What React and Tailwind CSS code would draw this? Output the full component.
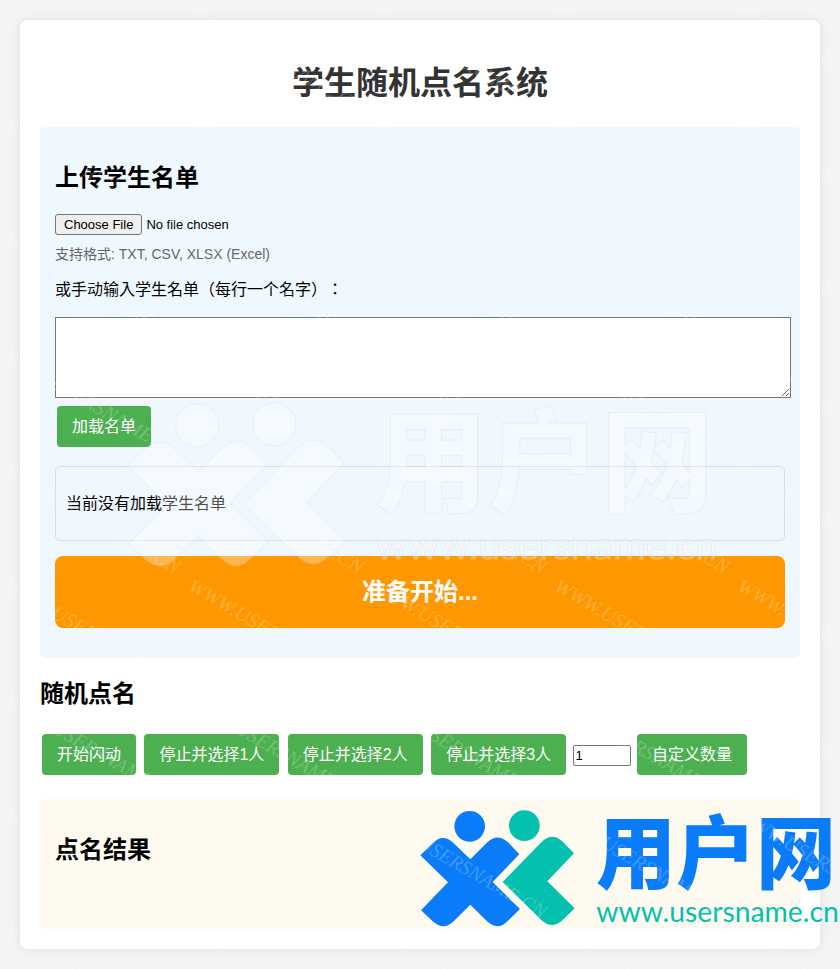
const columns = [6, 189, 372, 555, 738];
const rows = [16, 131, 246, 361, 476, 591, 706, 821, 936];

function Logo({ blue, teal }) {
  return (
    <>
      <g fill={blue}>
        <circle cx="179" cy="94" r="46" />
        <path d="M31 181 L68 145 Q98 115 128 142 L181 193 L232 142 Q262 113 294 142 L328 178 L248 261 L330 342 L294 377 Q264 409 231 379 L181 329 L131 379 Q101 409 68 379 L33 346 L114 262 Z" />
      </g>
      <g fill={teal}>
        <circle cx="343" cy="92" r="46" />
        <path d="M278 261 L394 142 Q424 110 456 138 L492 175 L412 259 L494 340 L458 375 Q426 405 394 375 Z" />
      </g>
      <text x="558" y="260" fontSize="240" fill={blue} className="font-['Noto_Sans_CJK_SC',sans-serif] font-black">
        用户网
      </text>
      <text x="559" y="380" fontSize="85" fill={teal} className="font-['Lato',sans-serif]">
        www.usersname.cn
      </text>
    </>
  );
}

function Watermark() {
  return (
    <svg aria-hidden="true" className="pointer-events-none absolute left-0 top-0 h-full w-full overflow-hidden">
      {rows.map((y) =>
        columns.map((x) => (
          <text
            key={x + "," + y}
            transform={`translate(${x - 2} ${y - 1}) rotate(30)`}
            fontSize="20"
            fill="#fff"
            fillOpacity="0.22"
            className="font-['Liberation_Serif',serif] italic"
          >
            WWW.USERSNAME.CN
          </text>
        ))
      )}
      <g transform="translate(113 381) scale(0.47)" opacity="0.3" stroke="#ccd6e4" strokeWidth="2">
        <Logo blue="#fff" teal="#fff" />
      </g>
    </svg>
  );
}

function CornerLogo() {
  return (
    <svg
      role="img"
      aria-label="用户网 www.usersname.cn"
      viewBox="0 0 1290 522"
      className="pointer-events-none absolute bottom-0 right-0 h-[174px] w-[430px]"
    >
      <Logo blue="#0a7cfa" teal="#03c1ae" />
    </svg>
  );
}

function Button({ children }) {
  return (
    <button type="button" className="m-0.5 h-[41px] rounded bg-[#4caf50] px-[15px] text-base text-white">
      {children}
    </button>
  );
}

function Heading({ children }) {
  return <h2 className="my-5 text-2xl font-bold">{children}</h2>;
}

export default function App() {
  return (
    <div className="relative overflow-hidden bg-[#f4f4f4] p-5 font-['Liberation_Sans','Noto_Sans_CJK_SC',sans-serif] text-black">
      <main className="flow-root rounded-lg bg-white p-5 shadow-[0_0_10px_rgba(0,0,0,0.1)]">
        <h1 className="mb-[22px] mt-[21px] text-center text-[32px] font-bold leading-[44px] text-[#333]">
          学生随机点名系统
        </h1>

        <section className="flow-root rounded-[5px] bg-[#f0f8ff] p-[15px]">
          <Heading>上传学生名单</Heading>
          <input
            type="file"
            aria-label="上传学生名单"
            accept=".txt,.csv,.xlsx"
            className="block h-[21px] text-[13px] file:mr-1 file:h-[21px] file:rounded-[3px] file:border file:border-solid file:border-[#767676] file:bg-[#efefef] file:px-2 file:text-black"
          />
          <p className="mt-2 text-sm leading-[22px] text-[#666]">支持格式: TXT, CSV, XLSX (Excel)</p>
          <label
            htmlFor="names"
            className="mb-[15px] mt-[13px] block font-['Liberation_Sans','Noto_Sans_CJK_TC',sans-serif] text-base [text-spacing-trim:space-all]"
          >
            或手动输入学生名单（每行一个名字）：
          </label>
          <textarea
            id="names"
            className="-mr-[6px] block h-[81px] w-[calc(100%+6px)] resize border border-[#767676] bg-white p-0.5"
          />
          <div className="mt-1.5">
            <Button>加载名单</Button>
          </div>
          <div className="mt-[17px] rounded-[5px] border border-[#ddd] px-2.5 py-6">
            <p className="text-base leading-[25px]">当前没有加载学生名单</p>
          </div>
          <div className="my-[15px] flex h-[72px] items-center justify-center rounded-lg bg-[#ff9800] text-2xl font-bold text-white">
            准备开始...
          </div>
        </section>

        <section>
          <Heading>随机点名</Heading>
          <div className="pt-0.5">
            <Button>开始闪动</Button> <Button>停止并选择1人</Button> <Button>停止并选择2人</Button>{" "}
            <Button>停止并选择3人</Button>{" "}
            <input
              type="number"
              aria-label="自定义数量"
              defaultValue="1"
              className="h-[21px] w-[58px] rounded-[2px] border border-[#767676] bg-white px-0.5 text-[13px]"
            />{" "}
            <Button>自定义数量</Button>
          </div>
        </section>

        <section className="mt-[22px] flow-root min-h-[130px] rounded-[5px] bg-[#fffaf0] p-[15px]">
          <Heading>点名结果</Heading>
        </section>
      </main>
      <CornerLogo />
      <Watermark />
    </div>
  );
}
